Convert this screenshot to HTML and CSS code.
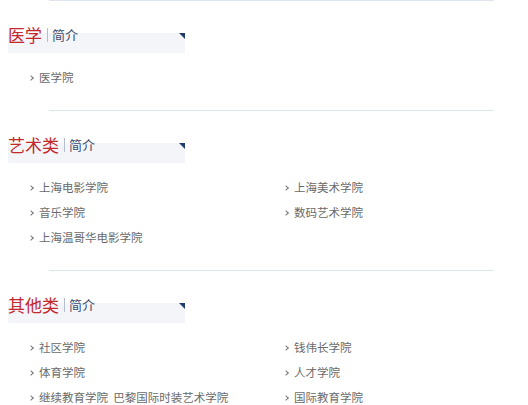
FILE: index.html
```html
<!DOCTYPE html>
<html lang="zh-CN">
<head>
    <meta charset="UTF-8">
    <meta name="viewport" content="width=device-width, initial-scale=1.0">
    <title>学院分类</title>
    <link rel="stylesheet" href="styles.css">
</head>
<body>
    <div class="page">
        <div class="section">
            <div class="head">
                <span class="title">医学</span>
                <span class="sub">简介</span>
            </div>
            <ul class="list">
                <li>医学院</li>
            </ul>
        </div>

        <div class="section">
            <div class="head">
                <span class="title">艺术类</span>
                <span class="sub">简介</span>
            </div>
            <ul class="list">
                <li>上海电影学院</li>
                <li>上海美术学院</li>
                <li>音乐学院</li>
                <li>数码艺术学院</li>
                <li>上海温哥华电影学院</li>
            </ul>
        </div>

        <div class="section">
            <div class="head">
                <span class="title">其他类</span>
                <span class="sub">简介</span>
            </div>
            <ul class="list">
                <li>社区学院</li>
                <li>钱伟长学院</li>
                <li>体育学院</li>
                <li>人才学院</li>
                <li>继续教育学院&nbsp;&nbsp;巴黎国际时装艺术学院</li>
                <li>国际教育学院</li>
            </ul>
        </div>
    </div>
</body>
</html>
```

FILE: styles.css
```css
body {
    margin: 0;
    padding: 0;
    background-color: #fff;
    font-family: "Noto Sans CJK SC", "Noto Sans", sans-serif;
    color: #666;
}
.page {
    width: 528px;
}
.section {
    padding: 24px 0 20px 8px;
}
.section::before {
    content: "";
    display: block;
    margin: -24px 34px 24px 41px;
    height: 1px;
    background-color: #dde5ee;
}
.head {
    position: relative;
    width: 177px;
    height: 28px;
    display: flex;
    align-items: flex-start;
    background: linear-gradient(to bottom, transparent 0, transparent 8px, #f3f5f9 8px);
}
.head::after {
    content: "";
    position: absolute;
    top: 8px;
    right: 0;
    width: 0;
    height: 0;
    border-top: 6px solid #1f3d6b;
    border-left: 6px solid transparent;
}
.title {
    font-size: 17px;
    line-height: 20px;
    height: 20px;
    color: #c4282c;
}
.sub {
    margin: 3px 0 0 5px;
    padding-left: 4px;
    border-left: 1px solid #b5bccb;
    font-size: 13px;
    line-height: 14px;
    color: #3b4c6e;
}
.list {
    list-style: none;
    margin: 12px 0 0;
    padding: 0 0 0 21px;
    display: grid;
    grid-template-columns: 255px 1fr;
}
.list li {
    position: relative;
    padding-left: 10px;
    height: 25px;
    line-height: 25px;
    font-size: 11.5px;
    white-space: nowrap;
    color: #6a6a6a;
}
.list li::before {
    content: "";
    position: absolute;
    left: 0;
    top: 10.5px;
    width: 3px;
    height: 3px;
    border-top: 1.5px solid #777;
    border-right: 1.5px solid #777;
    transform: rotate(45deg);
}
```
